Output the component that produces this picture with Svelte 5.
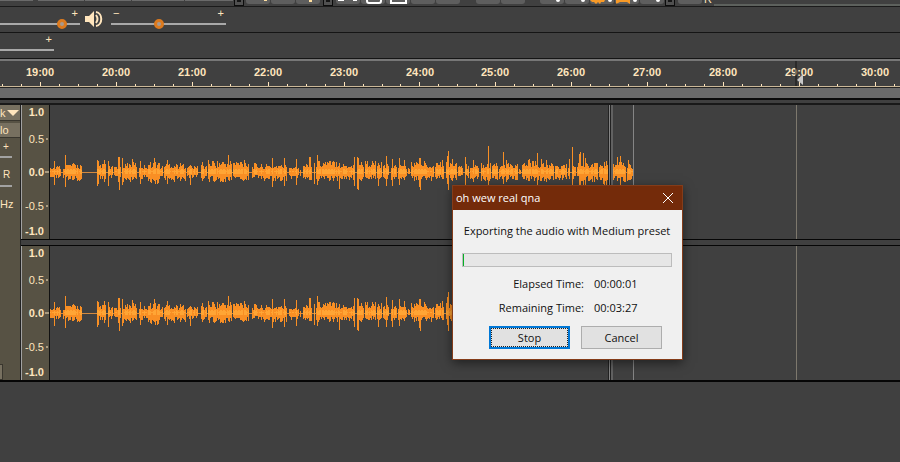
<script lang="ts">
  // toolbar pieces, left to right: [kind, width, icon]
  const tools: [string, number, string][] = [
    ["meter", 33, ""],
    ["space", 3, ""],
    ["meter", 46, ""],
    ["meter", 46, ""],
    ["meter", 52, ""],
    ["meter", 48, ""],
    ["grip", 10, ""],
    ["space", 0, ""],
    ["tool", 24, "dot-gold"],
    ["tool", 24, ""],
    ["tool", 24, "bar-gold"],
    ["space", 1, ""],
    ["grip", 10, ""],
    ["space", 1, ""],
    ["tool", 24, "cut"],
    ["tool", 24, "copy"],
    ["tool", 24, "paste"],
    ["tool", 24, ""],
    ["tool", 24, ""],
    ["space", 14, ""],
    ["tool", 24, ""],
    ["tool", 24, ""],
    ["space", 13, ""],
    ["tool", 24, "dot"],
    ["tool", 24, "dot"],
    ["tool", 24, "fit"],
    ["tool", 24, "fit-all"],
    ["tool", 24, "dot"],
    ["grip", 10, ""],
    ["space", 1, ""],
    ["tool", 24, ""],
  ];

  const PX_PER_MINUTE = 75.9;
  const minutes = Array.from({ length: 12 }, (_, i) => ({
    label: `${19 + i}:00`,
    x: Math.round(40 + i * PX_PER_MINUTE),
  }));
  const ticks = Array.from({ length: 62 }, (_, i) => ({
    x: Math.round(2 + (i * PX_PER_MINUTE) / 4),
    major: i % 4 === 2,
  }));

  const scale = [
    { text: "1.0", y: 11, bold: true },
    { text: "0.5", y: 38, bold: false },
    { text: "0.0", y: 71, bold: true },
    { text: "-0.5", y: 105, bold: false },
    { text: "-1.0", y: 130, bold: true },
  ];

  // loud passages: from, to, height above and below the centre line
  const passages = [
    [50, 53, 6, 6], [53, 61, 6, 6], [63, 65, 7, 7], [65, 82, 8, 9],
    [97, 106, 8, 7], [108, 113, 6, 6], [114, 118, 6, 6], [118, 121, 9, 9],
    [122, 137, 9, 10], [139, 148, 7, 7], [148, 160, 10, 12], [160, 163, 6, 4],
    [164, 172, 9, 9], [172, 186, 8, 10], [187, 198, 6, 6], [201, 207, 7, 7],
    [208, 232, 11, 10], [233, 249, 11, 9], [252, 258, 8, 6], [258, 287, 7, 9],
    [289, 299, 6, 7], [300, 301, 3, 4], [303, 312, 8, 8], [314, 315, 11, 14],
    [316, 338, 11, 9], [338, 355, 8, 8], [357, 364, 10, 9], [365, 376, 11, 8],
    [377, 382, 9, 8], [383, 389, 7, 7], [391, 397, 7, 8], [398, 407, 7, 8],
    [408, 410, 4, 4], [411, 434, 10, 9], [435, 444, 11, 7], [446, 457, 10, 8],
    [458, 463, 6, 5], [465, 469, 8, 8], [470, 479, 7, 7], [481, 491, 9, 9],
    [492, 498, 8, 8], [499, 518, 8, 8], [519, 521, 3, 3], [522, 537, 10, 9],
    [537, 554, 8, 9], [555, 567, 7, 8], [568, 570, 8, 6], [572, 576, 7, 7],
    [577, 598, 9, 10], [599, 610, 8, 12], [611, 626, 9, 10], [627, 634, 8, 9],
  ];
  const peaks: Record<number, [number, number]> = {
    54: [11, 13], 65: [17, 15], 97: [12, 14], 98: [11, 12], 104: [12, 10],
    108: [11, 14], 118: [15, 10], 119: [15, 18], 122: [14, 13], 132: [13, 8],
    140: [11, 12], 154: [14, 9], 167: [12, 12], 190: [7, 13], 202: [10, 9],
    228: [17, 8], 244: [12, 8], 272: [14, 15], 284: [14, 14], 296: [13, 13],
    309: [15, 8], 310: [15, 8], 317: [17, 13], 339: [9, 17], 354: [15, 14],
    357: [15, 17], 358: [14, 18], 378: [9, 14], 386: [16, 14], 392: [13, 14],
    399: [14, 13], 404: [12, 8], 419: [14, 15], 420: [14, 18], 447: [16, 12],
    448: [21, 18], 452: [13, 9], 465: [15, 14], 473: [12, 10], 488: [26, 15],
    503: [20, 12], 506: [12, 10], 528: [12, 9], 529: [13, 9], 537: [19, 13],
    541: [13, 9], 546: [12, 10], 569: [13, 7], 572: [25, 14], 579: [18, 15],
    580: [20, 14], 583: [19, 15], 585: [14, 18], 604: [10, 15], 606: [11, 18],
    612: [16, 12], 617: [15, 9], 620: [16, 13], 628: [12, 8],
  };

  const jitter = (n: number) => Math.abs(Math.sin(n * 12.9898) * 43758.5453) % 1;

  let outer = "";
  let inner = "";
  for (const [from, to, up, down] of passages) {
    for (let x = from; x < to; x++) {
      const [top, bottom] = peaks[x] ?? [
        Math.round(up * (0.4 + 0.7 * jitter(x))),
        Math.round(down * (0.4 + 0.65 * jitter(x + 900))),
      ];
      outer += `M${x - 50} ${67 - top}h1V${67 + bottom}h-1z`;
      const core = top > 5 ? 3 : 1;
      inner += `M${x - 50} ${67 - core + (x % 3 ? 0 : 1)}h1V${66 + core}h-1z`;
    }
  }
</script>

<main>
  <div class="toolbar">
    {#each tools as [kind, width, icon]}
      {#if kind === "tool"}
        <button class="tool" style="width: {width}px" aria-label="Tool">
          <svg width="24" height="5" aria-hidden="true">
            {#if icon === "dot-gold"}
              <path d="M18 0h3v1h-3z" fill="#ffdf9f" />
            {:else if icon === "bar-gold"}
              <path d="M13 0h3v2h-3z" fill="#ffdf9f" />
            {:else if icon === "cut"}
              <path d="M2 0h6v1H2zM17 0h4v1h-4z" fill="#fff" />
            {:else if icon === "copy"}
              <path d="M6 0v1q0 2 2 2h10q2 0 2-2v-1" fill="none" stroke="#fff" stroke-width="2" />
            {:else if icon === "paste"}
              <path d="M5 0v3h15v-3" fill="none" stroke="#fff" stroke-width="2" />
            {:else if icon === "dot"}
              <circle cx="18" cy="0" r="2" fill="#fff" />
            {:else if icon === "fit"}
              <path d="M0 0h15l-1 2h-3l-1 2-2-2-2 2-2-2H2z" fill="#f89a27" />
              <circle cx="20" cy="0" r="2" fill="#fff" />
            {:else if icon === "fit-all"}
              <path d="M1 0h14v4l-3-2H5l-4 2z" fill="#f89a27" />
              <circle cx="20" cy="0" r="2" fill="#fff" />
            {/if}
          </svg>
        </button>
      {:else}
        <span class={kind} style="width: {width}px"></span>
      {/if}
    {/each}
    <span class="clipped">R</span>
    <span class="rest"></span>
  </div>

  <div class="row">
    <label class="slider recording">
      <span class="signs"><span></span><span>+</span></span>
      <input type="range" min="0" max="70" value="57" aria-label="Recording volume" />
    </label>
    <svg class="speaker" width="18" height="16" viewBox="0 0 18 16" aria-hidden="true">
      <path d="M0 5h4l5-5v16l-5-5H0z" fill="#ffe5bd" />
      <path d="M11 4q3 4 0 8" fill="none" stroke="#ffe5bd" stroke-width="2" />
      <path d="M11 1c7 1 7 13 0 14" fill="none" stroke="#ffe5bd" stroke-width="2" />
    </svg>
    <label class="slider playback">
      <span class="signs"><span>−</span><span>+</span></span>
      <input type="range" min="0" max="105" value="43" aria-label="Playback volume" />
    </label>
  </div>
  <div class="row">
    <label class="slider speed">
      <span class="signs"><span></span><span>+</span></span>
      <input type="range" min="0" max="100" value="0" aria-label="Playback speed" />
    </label>
  </div>

  <div class="timeline">
    <svg width="100%" height="25">
      {#each minutes as minute}
        <text x={minute.x} y="15" text-anchor="middle">{minute.label}</text>
      {/each}
      {#each ticks as tick}
        <rect x={tick.x} y={tick.major ? 21 : 23} width="1" height={tick.major ? 4 : 2} />
      {/each}
      <path d="M796 0v25" stroke="#151515" stroke-width="1" />
      <path d="M803 13v11l-6-5z" fill="#c8c8c8" />
    </svg>
  </div>
  <div class="scrub"></div>

  <div class="project">
    <aside>
      <button class="name"
        >k<svg width="12" height="6" aria-hidden="true"><path d="M0 0h12l-6 6z" /></svg></button
      >
      <button class="solo">lo</button>
      <div class="mix">+</div>
      <div class="mix pan">R</div>
      <div class="rate">Hz</div>
      <button class="select" aria-label="Select"></button>
    </aside>
    <div class="tracks">
      {#each [0, 1] as channel (channel)}
        <section>
          <svg class="scale" width="28" height="134">
            {#each scale as mark}
              <text class:bold={mark.bold} x="22" y={mark.y} text-anchor="end">{mark.text}</text>
            {/each}
            <path d="M24 34h2M23 67h4M24 101h2" />
          </svg>
          <svg class="wave" width="100%" height="134" shape-rendering="crispEdges">
            <path d="M0 67h583v1H0z" fill="#d58a3e" />
            <path d={outer} fill="#f98f24" />
            <path d={inner} fill="#ffa535" />
            <rect x="558" width="1" height="134" fill="#222" />
            <rect x="559" width="1" height="134" fill="#858585" />
            <rect x="560" width="1" height="134" fill="#222" />
            <rect x="561" width="2" height="134" fill="#626262" />
            <rect x="583" width="1" height="134" fill="#858585" />
            <rect x="746" width="1" height="134" fill="#7d786d" />
          </svg>
        </section>
      {/each}
    </div>
  </div>

  <div class="dialog" role="dialog" aria-labelledby="dialog-title">
    <header>
      <div id="dialog-title">oh wew real qna</div>
      <button class="close" aria-label="Close">
        <svg width="10" height="10" aria-hidden="true">
          <path d="M0 0l10 10M10 0L0 10" stroke="#fff" />
        </svg>
      </button>
    </header>
    <article>
      <p>Exporting the audio with Medium preset</p>
      <div class="progress" role="progressbar" aria-label="Export" aria-valuenow="1">
        <div style="width: 1px"></div>
      </div>
      <dl>
        <dt>Elapsed Time:</dt>
        <dd>00:00:01</dd>
        <dt>Remaining Time:</dt>
        <dd>00:03:27</dd>
      </dl>
      <footer>
        <button class="default">Stop</button>
        <button>Cancel</button>
      </footer>
    </article>
  </div>
</main>

<style>
  :global(body) {
    margin: 0;
    background: #404040;
  }
  main {
    position: relative;
    min-height: 100vh;
    overflow: hidden;
    background: #404040;
    color: #ffe5bd;
    font: 11px/16px "Liberation Sans", Arial, sans-serif;
  }
  button {
    box-sizing: border-box;
    margin: 0;
    padding: 0;
    border: none;
    font: inherit;
    color: inherit;
  }
  svg {
    display: block;
    flex: none;
  }
  .toolbar {
    display: flex;
    gap: 1px;
    height: 6px;
    overflow: hidden;
    border-bottom: 1px solid #1b1b1b;
  }
  .toolbar > * {
    flex: none;
  }
  .tool {
    height: 4px;
    overflow: hidden;
    background: #5e5e5e;
    border-radius: 0 0 3px 3px;
  }
  .meter {
    height: 1px;
    background: #6a6a6a;
  }
  .grip {
    box-sizing: border-box;
    height: 6px;
    border: 1px solid #0c0c0c;
    border-top: none;
    background: linear-gradient(#151515, #151515) center top / 4px 2px no-repeat #505050;
  }
  .clipped {
    width: 10px;
    line-height: 4px;
    text-align: center;
    margin-top: -3px;
  }
  .toolbar .rest {
    flex: 1;
    margin-top: 4px;
    background: #5d615d;
  }
  .row {
    display: flex;
    height: 25px;
    border-bottom: 1px solid #151515;
  }
  .slider {
    display: flex;
    flex-direction: column;
    padding-top: 2px;
  }
  .signs {
    display: flex;
    justify-content: space-between;
    height: 9px;
    line-height: 9px;
    padding: 0 2px;
  }
  .recording {
    width: 80px;
  }
  .playback {
    width: 115px;
  }
  .speed {
    width: 54px;
  }
  .speaker {
    margin: 4px 8px 0 5px;
  }
  input {
    appearance: none;
    display: block;
    width: 100%;
    height: 11px;
    margin: 0;
    background: linear-gradient(#a9a9a9, #a9a9a9) center / 100% 2px no-repeat;
  }
  input::-webkit-slider-thumb {
    appearance: none;
    box-sizing: border-box;
    width: 10px;
    height: 10px;
    border: 3px solid #dc7a1e;
    border-radius: 50%;
    background: #a89a90;
  }
  .speed input::-webkit-slider-thumb {
    visibility: hidden;
  }
  .timeline {
    border-top: 2px solid #777;
    border-bottom: 1px solid #cbb898;
    font-weight: bold;
  }
  .timeline text,
  .timeline rect {
    fill: #ffe5bd;
  }
  .scrub {
    height: 10px;
    background: #6b6b6b;
    border-top: 1px solid #222;
    border-bottom: 2px solid #0b0b0b;
  }
  .project {
    display: flex;
    margin-top: 3px;
    border-top: 2px solid #191919;
    border-bottom: 2px solid #060606;
  }
  aside {
    display: flex;
    flex-direction: column;
    align-items: flex-start;
    box-sizing: border-box;
    width: 20px;
    overflow: hidden;
    background: #575244;
  }
  aside button {
    width: 20px;
    background: #777060;
    border-bottom: 1px solid #39362e;
  }
  .name {
    display: flex;
    align-items: center;
    gap: 1px;
    height: 16px;
  }
  .name path {
    fill: #ffe5bd;
  }
  .solo {
    height: 15px;
    margin-top: 2px;
    text-align: left;
    line-height: 14px;
  }
  .mix {
    box-sizing: border-box;
    width: 12px;
    height: 20px;
    padding-left: 3px;
    border-bottom: 2px solid #a2a2a2;
    line-height: 18px;
    font-size: 10px;
  }
  .pan {
    height: 18px;
    margin-top: 11px;
    line-height: 12px;
  }
  .rate {
    margin-top: 9px;
  }
  aside .select {
    width: 3px;
    height: 16px;
    margin-top: auto;
    border: 1px solid #39362e;
    border-left: none;
  }
  .tracks {
    flex: 1;
    min-width: 0;
    border-left: 1px solid #222;
  }
  section {
    display: flex;
  }
  section + section {
    margin-top: 6px;
    border-top: 1px solid #060606;
    box-shadow: 0 -5px #404040, 0 -6px #060606;
  }
  .scale {
    box-sizing: border-box;
    border-left: 1px solid #a2a2a2;
    border-right: 1px solid #111;
    background: #575244;
    width: 29px;
  }
  .scale text {
    fill: #ffe5bd;
  }
  .scale .bold {
    font-weight: bold;
  }
  .scale path {
    stroke: #ffe5bd;
  }
  .wave {
    flex: 1;
    min-width: 0;
  }
  .dialog {
    position: absolute;
    left: 452px;
    top: 185px;
    box-sizing: border-box;
    width: 231px;
    border: 1px solid #843c19;
    box-shadow: 0 3px 10px rgba(0, 0, 0, 0.5);
    background: #f0f0f0;
    color: #111;
    font: 11px/16px "Open Sans", "Noto Sans", sans-serif;
  }
  header {
    display: flex;
    justify-content: space-between;
    align-items: center;
    height: 24px;
    padding: 0 9px 0 3px;
    background: #742b0a;
    color: #fff;
  }
  .close {
    background: none;
  }
  article {
    padding: 13px 10px 10px 9px;
  }
  p {
    margin: 0 0 14px;
    text-align: center;
    white-space: nowrap;
  }
  .progress {
    height: 12px;
    border: 1px solid #bcbcbc;
    background: #e6e6e6;
  }
  .progress div {
    height: 12px;
    background: #06b025;
  }
  dl {
    display: grid;
    grid-template-columns: 122px 1fr;
    gap: 8px 10px;
    margin: 9px 0 10px;
  }
  dt {
    text-align: right;
  }
  dd {
    margin: 0;
  }
  footer {
    display: flex;
    justify-content: flex-end;
    gap: 11px;
    padding-right: 10px;
  }
  footer button {
    width: 81px;
    height: 23px;
    border: 1px solid #adadad;
    background: #e1e1e1;
  }
  footer .default {
    border: 2px solid #0078d7;
    outline: 1px dotted #222;
    outline-offset: -3px;
  }
</style>
